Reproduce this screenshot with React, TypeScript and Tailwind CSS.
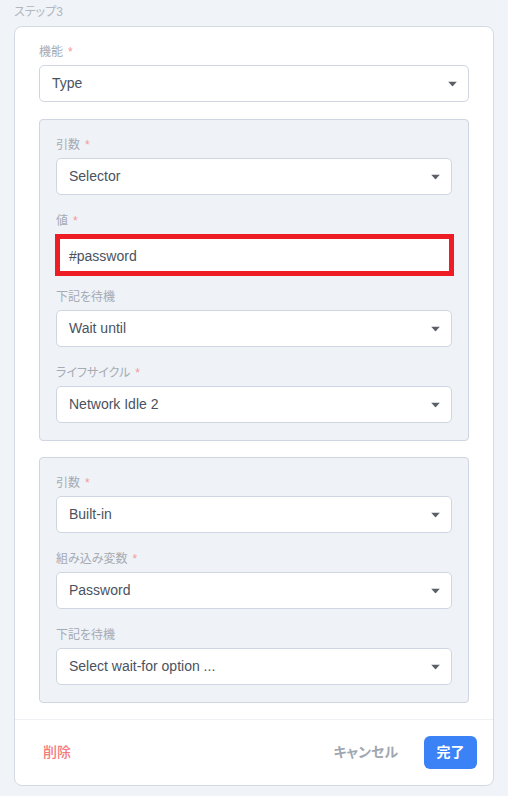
import React from "react";

const jp = "[font-feature-settings:'palt']";
const FONT = { fontFamily: '"Liberation Sans", "Noto Sans CJK JP", sans-serif' };

function Caret() {
  return (
    <svg width="9" height="5" viewBox="0 0 9 5" className="absolute right-[11px] top-1/2 -translate-y-1/2">
      <polygon points="0,0 9,0 4.5,5" fill="#5b5f66" />
    </svg>
  );
}

function Label({ text, required }: { text: string; required?: boolean }) {
  return (
    <div className={`h-4 mb-[5px] text-[12px] leading-4 text-[#a6abb3] ${jp}`}>
      {text}
      {required && <span className="ml-[5px] text-[#f29a9a]">*</span>}
    </div>
  );
}

function Select({ value }: { value: string }) {
  return (
    <div className="relative h-[37px] rounded-[5px] border border-[#cfd6e1] bg-white pl-3 flex items-center text-[14px] text-[#4a5260]">
      {value}
      <Caret />
    </div>
  );
}

function Field({ label, required, value }: { label: string; required?: boolean; value: string }) {
  return (
    <div>
      <Label text={label} required={required} />
      <Select value={value} />
    </div>
  );
}

function Panel({ children }: { children: React.ReactNode }) {
  return (
    <div className="rounded-[4px] border border-[#cfd6e1] bg-[#eff2f7] px-4 pt-[17px] pb-[17px] flex flex-col gap-[18px]">
      {children}
    </div>
  );
}

export default function App() {
  return (
    <div className="w-[508px] h-[796px] bg-[#f0f3f8]" style={FONT}>
      <div className="h-[26px] pl-[14px] pt-[4px] text-[12px] leading-4 text-[#b2b7bf]">
        <span className={jp}>ステップ3</span>
      </div>
      <div className="mx-[14px] rounded-[8px] border border-[#d3dae4] bg-white">
        <div className="px-6 pt-[17px] pb-[16px] flex flex-col">
          <Field label="機能" required value="Type" />
          <div className="mt-[17px]">
            <Panel>
              <Field label="引数" required value="Selector" />
              <div>
                <Label text="値" required />
                <div className="relative h-[37px]">
                  <div className="h-[37px] rounded-[5px] border border-[#cfd6e1] bg-white" />
                  <div className="absolute left-[-1px] right-[-2px] top-0 bottom-[-5px] border-[5px] border-[#ee1c25] flex items-start pt-[7px] pl-[9px] bg-white text-[14px] leading-5 text-[#4a5260]">
                    #password
                  </div>
                </div>
              </div>
              <Field label="下記を待機" value="Wait until" />
              <Field label="ライフサイクル" required value="Network Idle 2" />
            </Panel>
          </div>
          <div className="mt-[16px]">
            <Panel>
              <Field label="引数" required value="Built-in" />
              <Field label="組み込み変数" required value="Password" />
              <Field label="下記を待機" value="Select wait-for option ..." />
            </Panel>
          </div>
        </div>
        <div className="border-t border-[#eef0f3] px-4 py-[16px] flex items-center">
          <button className={`px-3 h-[33px] text-[14px] font-medium text-[#f47b7b] ${jp}`}>削除</button>
          <div className="flex-1" />
          <button className={`px-3 h-[33px] text-[14px] font-bold text-[#a1a7b0] ${jp}`}>キャンセル</button>
          <button className={`ml-[14px] w-[53px] h-[33px] rounded-[6px] bg-[#3b82f6] text-[14px] font-bold text-white ${jp}`}>完了</button>
        </div>
      </div>
    </div>
  );
}
